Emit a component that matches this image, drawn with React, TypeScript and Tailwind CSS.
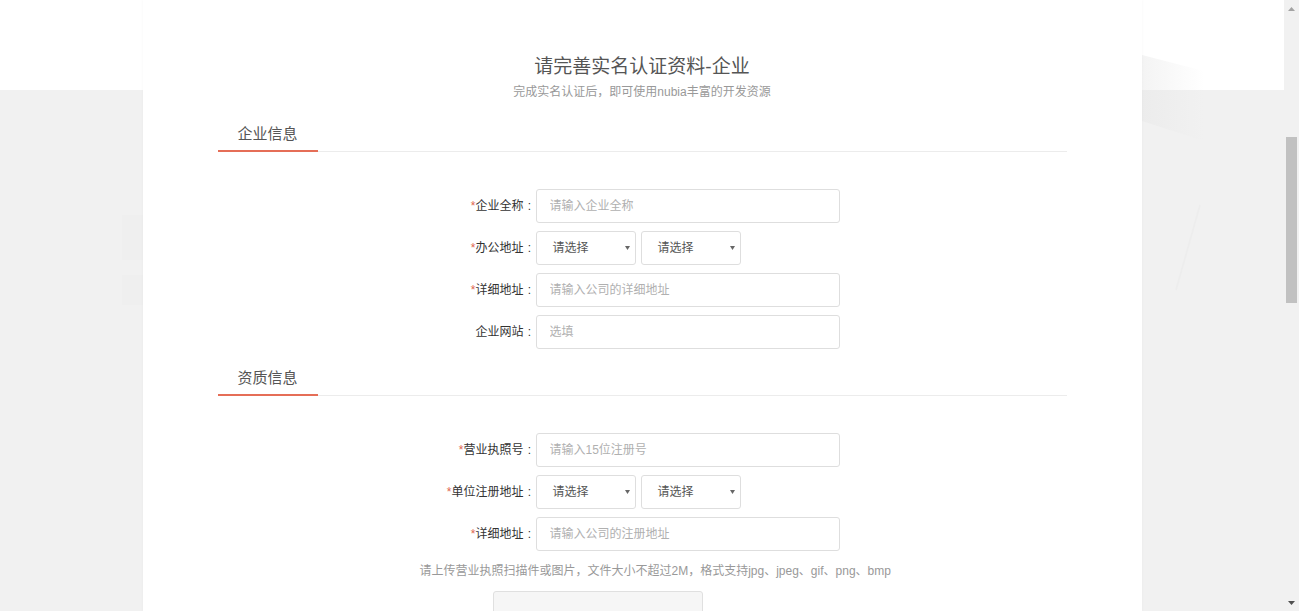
import React from 'react';

const FONT = '"Liberation Sans", "Noto Sans CJK SC", sans-serif';

interface FieldProps {
  label: string;
  required?: boolean;
  children: React.ReactNode;
}

const Field: React.FC<FieldProps> = ({ label, required, children }) => (
  <div className="flex items-center h-[34px]">
    <div className="w-[152px] shrink-0 flex justify-end text-[12px] text-[#333] leading-[34px]">
      {required && <span className="text-[#e0664f]">*</span>}
      <span>{label}</span>
      <span className="w-[12px] text-center">:</span>
    </div>
    {children}
  </div>
);

const TextInput: React.FC<{ placeholder: string }> = ({ placeholder }) => (
  <input
    type="text"
    placeholder={placeholder}
    className="w-[304px] h-[34px] border border-[#dedede] rounded-[3px] px-[13px] text-[12px] text-[#333] placeholder:text-[#b0b0b0] outline-none bg-white"
  />
);

const SelectBox: React.FC = () => (
  <div className="w-[100px] h-[34px] border border-[#dedede] rounded-[3px] flex items-center justify-between pl-[16px] pr-[5px] bg-white">
    <span className="text-[12px] text-[#555]">请选择</span>
    <svg width="5" height="4" viewBox="0 0 5 4">
      <path d="M0 0 H5 L2.5 4 Z" fill="#666" />
    </svg>
  </div>
);

const SectionHeader: React.FC<{ title: string }> = ({ title }) => (
  <div className="border-b border-[#ececec]">
    <div className="w-[100px] pl-[20px] pb-[6px] border-b-2 border-[#e56e57] -mb-px text-[15px] leading-[20px] text-[#555]">
      {title}
    </div>
  </div>
);

const Scrollbar: React.FC = () => (
  <div className="w-[15px] shrink-0 bg-[#f1f1f1] flex flex-col items-center">
    <div className="h-[17px] flex items-center justify-center">
      <svg width="7" height="4" viewBox="0 0 7 4">
        <path d="M0 4 L3.5 0 L7 4 Z" fill="#a3a3a3" />
      </svg>
    </div>
    <div className="mt-[120px] w-[11px] h-[166px] bg-[#c1c1c1]" />
    <div className="flex-1" />
    <div className="h-[17px] flex items-center justify-center">
      <svg width="7" height="4" viewBox="0 0 7 4">
        <path d="M0 0 L7 0 L3.5 4 Z" fill="#505050" />
      </svg>
    </div>
  </div>
);

export default function App() {
  return (
    <div className="h-[611px] w-full flex overflow-hidden" style={{ fontFamily: FONT }}>
      <div className="relative flex-1 bg-[linear-gradient(to_bottom,#ffffff_90px,#f1f1f1_90px)]">
        {/* faint background decoration */}
        <svg className="absolute left-[1142px] top-[55px]" width="70" height="240" viewBox="0 0 70 240">
          <defs>
            <linearGradient id="dg" x1="0" y1="0" x2="1" y2="0">
              <stop offset="0" stopColor="#e6e6e6" stopOpacity="0.45" />
              <stop offset="1" stopColor="#e6e6e6" stopOpacity="0" />
            </linearGradient>
          </defs>
          <path d="M0 0 L62 16 L62 86 L0 66 Z" fill="url(#dg)" />
          <path d="M58 150 L34 235" stroke="#ebebeb" strokeWidth="1.5" opacity="0.6" />
        </svg>
        <svg className="absolute left-[120px] top-[215px]" width="24" height="100" viewBox="0 0 24 100">
          <rect x="2" y="0" width="22" height="45" fill="#ebebeb" opacity="0.3" />
          <rect x="2" y="60" width="22" height="30" fill="#ececec" opacity="0.25" />
        </svg>

        <div className="relative mx-auto w-[999px] h-full bg-white shadow-[0_0_3px_rgba(0,0,0,0.04)] px-[75px] pt-[54px]">
          <div className="text-center">
            <div className="text-[19px] leading-[26px] text-[#555]">请完善实名认证资料-企业</div>
            <div className="mt-[4px] text-[12px] leading-[16px] text-[#999]">完成实名认证后，即可使用nubia丰富的开发资源</div>
          </div>

          <div className="mt-[24px]">
            <SectionHeader title="企业信息" />
          </div>
          <div className="mt-[37px] flex flex-col gap-[8px] pl-[166px]">
            <Field label="企业全称" required>
              <TextInput placeholder="请输入企业全称" />
            </Field>
            <Field label="办公地址" required>
              <div className="flex gap-[5px]">
                <SelectBox />
                <SelectBox />
              </div>
            </Field>
            <Field label="详细地址" required>
              <TextInput placeholder="请输入公司的详细地址" />
            </Field>
            <Field label="企业网站">
              <TextInput placeholder="选填" />
            </Field>
          </div>

          <div className="mt-[19px]">
            <SectionHeader title="资质信息" />
          </div>
          <div className="mt-[37px] flex flex-col gap-[8px] pl-[166px]">
            <Field label="营业执照号" required>
              <TextInput placeholder="请输入15位注册号" />
            </Field>
            <Field label="单位注册地址" required>
              <div className="flex gap-[5px]">
                <SelectBox />
                <SelectBox />
              </div>
            </Field>
            <Field label="详细地址" required>
              <TextInput placeholder="请输入公司的注册地址" />
            </Field>
          </div>

          <div className="mt-[12px] pl-[202px] text-[12px] leading-[16px] text-[#999]">
            请上传营业执照扫描件或图片，文件大小不超过2M，格式支持jpg、jpeg、gif、png、bmp
          </div>
          <div className="mt-[12px] ml-[275px] w-[210px] h-[80px] border border-[#e0e0e0] rounded-[3px] bg-[#f6f6f6]" />
        </div>
      </div>
      <Scrollbar />
    </div>
  );
}
